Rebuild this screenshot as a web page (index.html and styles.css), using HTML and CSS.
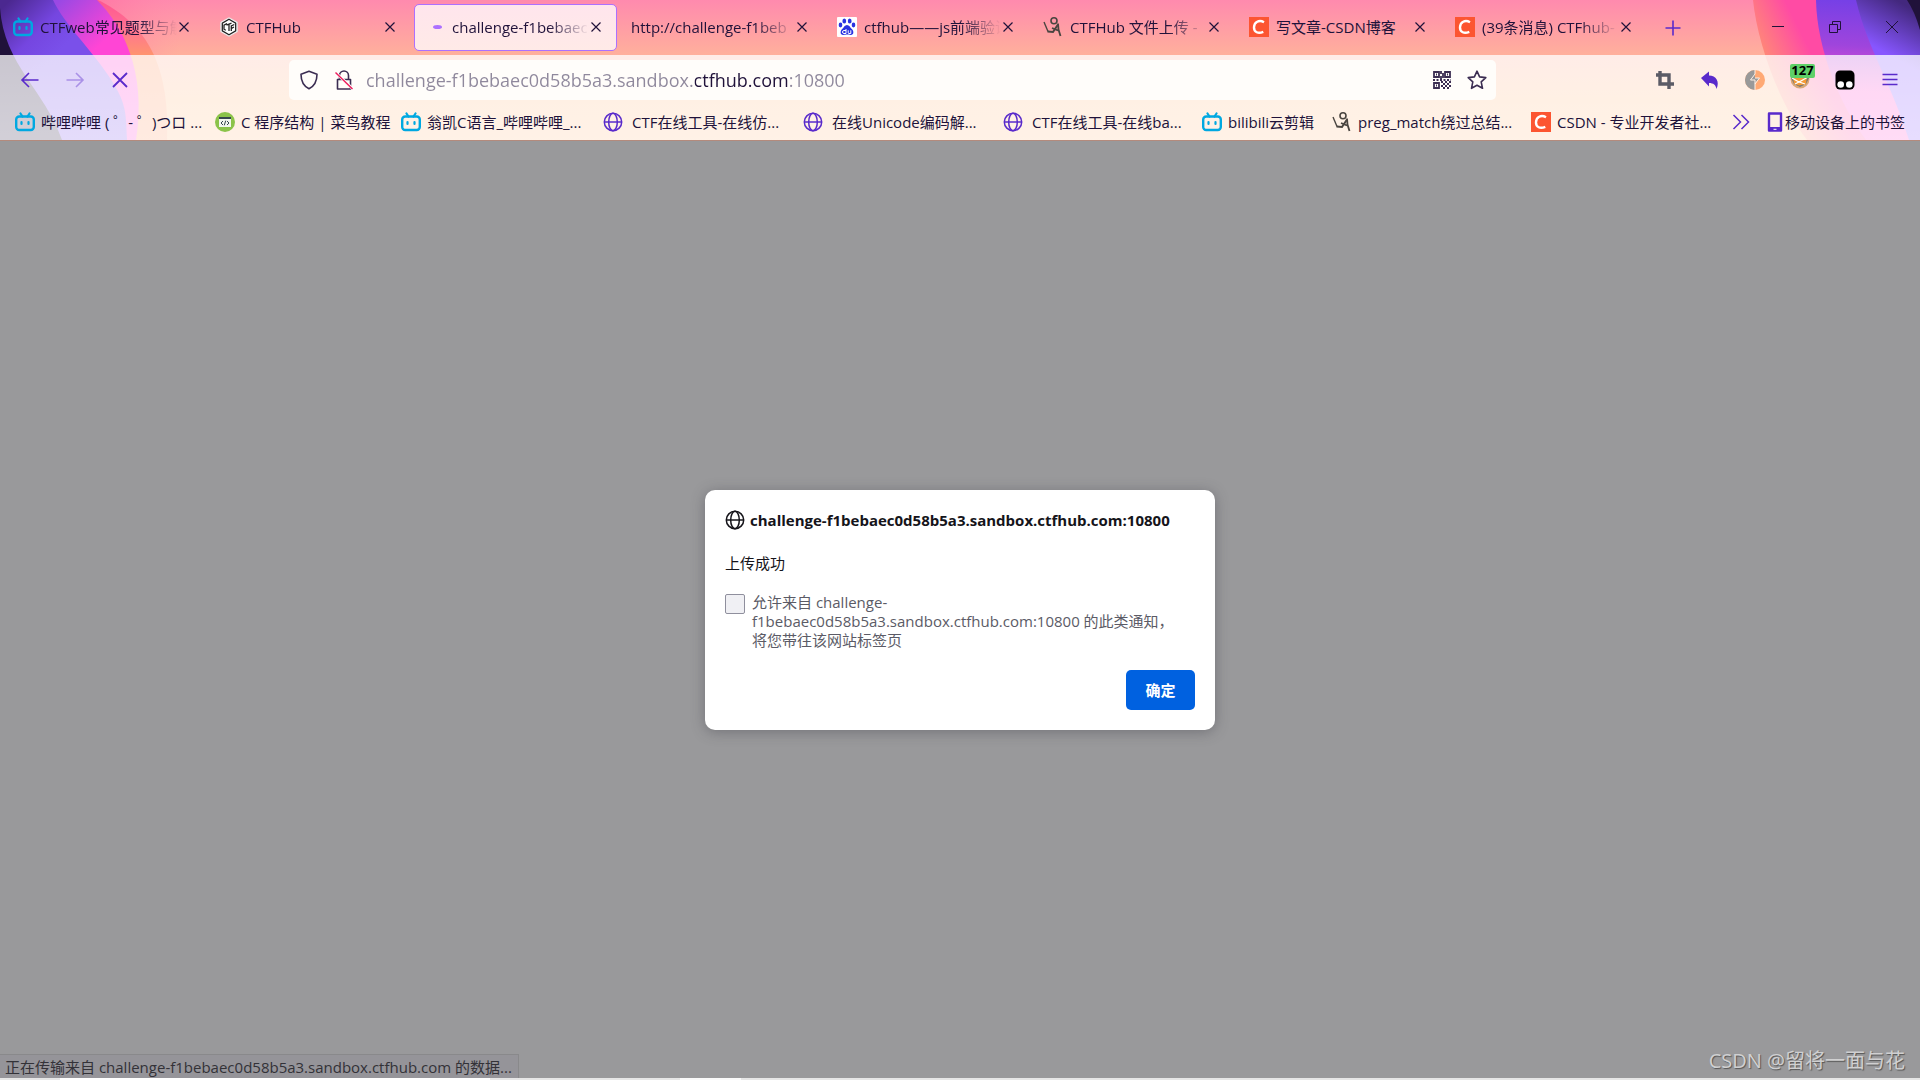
FILE: index.html
```html
<!DOCTYPE html>
<html lang="zh-CN">
<head>
    <meta charset="UTF-8">
    <meta name="viewport" content="width=device-width, initial-scale=1.0">
    <title>challenge-f1bebaec0d58b5a3.sandbox.ctfhub.com:10800</title>
    <link rel="stylesheet" href="styles.css">
</head>
<body>

    <!-- shared icons -->
    <svg class="sprite" aria-hidden="true">
        <symbol id="tv" viewBox="0 0 20 20">
            <path d="M5.500 1.500l2 3M14.500 1.500l-2 3" fill="none" stroke="#00a8e1" stroke-width="2.200" stroke-linecap="round"/>
            <rect x="1.200" y="4.500" width="17.600" height="13.500" rx="3" fill="none" stroke="#00a8e1" stroke-width="2.400"/>
            <path d="M6.500 10v2M13.500 10v2" stroke="#00a8e1" stroke-width="2.200" stroke-linecap="round"/>
        </symbol>
        <symbol id="globe" viewBox="0 0 20 20">
            <g fill="none" stroke="currentColor" stroke-width="1.500">
                <circle cx="10" cy="10" r="8.700"/>
                <ellipse cx="10" cy="10" rx="4.300" ry="8.700"/>
                <path d="M1.300 10h17.400"/>
            </g>
        </symbol>
        <symbol id="csdn" viewBox="0 0 20 20">
            <rect width="20" height="20" fill="#fc5531"/>
            <path d="M15 5.200C10 2.500 5.200 5 5 10.300c-.2 5 4.300 6.700 9.300 4.500" fill="none" stroke="#fff" stroke-width="2.400"/>
        </symbol>
        <symbol id="stick" viewBox="0 0 20 20">
            <g fill="none" stroke="#4a4540">
                <circle cx="11" cy="3.800" r="3" stroke-width="1.600"/>
                <path d="M1 5l4 9.500" stroke-width="1.400"/>
                <path d="M4.500 14.500L10 15l5-7.500" stroke-width="2"/>
                <path d="M15 6.500l.5 6 2 6.500M9 11l6 2.500" stroke-width="1.800"/>
            </g>
        </symbol>
        <symbol id="close" viewBox="0 0 12 12">
            <path d="M1.500 1.500l9 9M10.500 1.500l-9 9" fill="none" stroke="currentColor" stroke-width="1.200"/>
        </symbol>
    </svg>

    <header class="browser">
        <svg class="art art-left" viewBox="0 0 200 140" aria-hidden="true">
            <defs>
                <linearGradient id="l1" gradientUnits="userSpaceOnUse" x1="0" y1="0" x2="0" y2="60">
                    <stop offset="0" stop-color="#ff5592"/><stop offset=".5" stop-color="#ff7490"/><stop offset="1" stop-color="#ff9a68"/>
                </linearGradient>
                <linearGradient id="l2" gradientUnits="userSpaceOnUse" x1="60" y1="0" x2="100" y2="45">
                    <stop offset="0" stop-color="#9a48e4"/><stop offset="1" stop-color="#ff45d5"/>
                </linearGradient>
                <linearGradient id="l3" gradientUnits="userSpaceOnUse" x1="10" y1="0" x2="60" y2="50">
                    <stop offset="0" stop-color="#4b2890"/><stop offset=".6" stop-color="#7546e0"/><stop offset="1" stop-color="#7a50ea"/>
                </linearGradient>
                <linearGradient id="l4" x1="0" y1="0" x2="1" y2="0">
                    <stop offset=".4" stop-color="#ff5f98" stop-opacity=".6"/><stop offset=".9" stop-color="#ff86ab" stop-opacity="0"/>
                </linearGradient>
            </defs>
            <path d="M0 0H200V55H0z" fill="url(#l4)"/>
            <path d="M98 0C142 22 170 58 167 140H0V0z" fill="url(#l1)"/>
            <path d="M97 0C122 25 147 70 136 140H0V0z" fill="url(#l2)"/>
            <path d="M53 0C65 25 90 48 108 75S126 110 127 140H0V0z" fill="url(#l3)"/>
            <path d="M0 8C4 65 45 90 62 140H0z" fill="#20123a"/>
        </svg>
        <svg class="art art-right" viewBox="0 0 240 140" aria-hidden="true">
            <defs>
                <linearGradient id="r1" gradientUnits="userSpaceOnUse" x1="80" y1="50" x2="120" y2="30">
                    <stop offset="0" stop-color="#ff8a76"/><stop offset="1" stop-color="#ff4ba4"/>
                </linearGradient>
                <linearGradient id="r2" gradientUnits="userSpaceOnUse" x1="160" y1="0" x2="155" y2="90">
                    <stop offset="0" stop-color="#7640e6"/><stop offset=".5" stop-color="#9f45dc"/><stop offset="1" stop-color="#ff4fd0"/>
                </linearGradient>
                <linearGradient id="r3" gradientUnits="userSpaceOnUse" x1="225" y1="5" x2="200" y2="50">
                    <stop offset="0" stop-color="#43287e"/><stop offset="1" stop-color="#8756ff"/>
                </linearGradient>
            </defs>
            <path d="M73 0C77 40 97 100 127 140H240V0z" fill="url(#r1)"/>
            <path d="M136 0C137 50 160 105 186 140H240V0z" fill="url(#r2)"/>
            <path d="M176 0C188 50 210 80 229 140H240V0z" fill="url(#r3)"/>
            <path d="M227 0Q235 12 240 30V0z" fill="#20123a"/>
        </svg>

        <div class="titlebar">
            <nav class="tabs">
                <div class="tab">
                    <svg class="icon"><use href="#tv"/></svg>
                    <a href="#" class="tab-title">CTFweb常见题型与解</a>
                    <button class="tab-close" aria-label="关闭"><svg><use href="#close"/></svg></button>
                </div>
                <div class="tab">
                    <svg class="icon" viewBox="0 0 20 20">
                        <path d="M10 .5l8.500 4.700v9.600L10 19.500l-8.500-4.700V5.200z" fill="#fff" stroke="#ddd" stroke-width=".6"/>
                        <path d="M10 2.300l6.700 3.800v7.800L10 17.700l-6.700-3.800V6.100z" fill="none" stroke="#222" stroke-width="1.300"/>
                        <path d="M8 6.500L5 8.200v4l1.800 1M7.500 8.200l5-2M10 7.500v6.500M12.300 14V9l3-1.500M12.500 11.300l2.500-1.300" fill="none" stroke="#222" stroke-width="1.300"/>
                    </svg>
                    <a href="#" class="tab-title">CTFHub</a>
                    <button class="tab-close" aria-label="关闭"><svg><use href="#close"/></svg></button>
                </div>
                <div class="tab active">
                    <span class="icon loading"></span>
                    <a href="#" class="tab-title">challenge-f1bebaec</a>
                    <button class="tab-close" aria-label="关闭"><svg><use href="#close"/></svg></button>
                </div>
                <div class="tab">
                    <a href="#" class="tab-title">http://challenge-f1beb</a>
                    <button class="tab-close" aria-label="关闭"><svg><use href="#close"/></svg></button>
                </div>
                <div class="tab">
                    <svg class="icon" viewBox="0 0 20 20">
                        <rect width="20" height="20" rx="1" fill="#fff"/>
                        <g fill="#2932e1">
                            <ellipse cx="7.300" cy="4" rx="1.900" ry="2.600"/>
                            <ellipse cx="12.700" cy="4" rx="1.900" ry="2.600"/>
                            <ellipse cx="3.500" cy="8" rx="1.800" ry="2.400"/>
                            <ellipse cx="16.500" cy="8" rx="1.800" ry="2.400"/>
                            <path d="M10 8c2.300 0 3 2.300 4.800 4 2.200 2 2.200 6-1 6-1.500 0-2.500-.4-3.800-.4s-2.300.4-3.800.4c-3.200 0-3.200-4-1-6C7 10.300 7.700 8 10 8z"/>
                        </g>
                        <path d="M9 12v4.500H7a1.300 1.300 0 010-3h2M11.200 13.300v2.500q0 .7.800.7h1.800v-3.200" fill="none" stroke="#fff"/>
                    </svg>
                    <a href="#" class="tab-title">ctfhub——js前端验证</a>
                    <button class="tab-close" aria-label="关闭"><svg><use href="#close"/></svg></button>
                </div>
                <div class="tab">
                    <svg class="icon"><use href="#stick"/></svg>
                    <a href="#" class="tab-title">CTFHub 文件上传 -</a>
                    <button class="tab-close" aria-label="关闭"><svg><use href="#close"/></svg></button>
                </div>
                <div class="tab">
                    <svg class="icon"><use href="#csdn"/></svg>
                    <a href="#" class="tab-title fits">写文章-CSDN博客</a>
                    <button class="tab-close" aria-label="关闭"><svg><use href="#close"/></svg></button>
                </div>
                <div class="tab">
                    <svg class="icon"><use href="#csdn"/></svg>
                    <a href="#" class="tab-title">(39条消息) CTFhub-</a>
                    <button class="tab-close" aria-label="关闭"><svg><use href="#close"/></svg></button>
                </div>
            </nav>
            <button class="tool" aria-label="新建标签页">
                <svg class="icon" viewBox="0 0 20 20"><path d="M10 2.500v15M2.500 10h15" fill="none" stroke="currentColor" stroke-width="1.600"/></svg>
            </button>
            <div class="window-controls">
                <button aria-label="最小化"><svg viewBox="0 0 14 14"><path d="M1 6.500h12" fill="none" stroke="currentColor"/></svg></button>
                <button aria-label="还原"><svg viewBox="0 0 14 14"><path d="M1.500 4.500h8v8h-8zM4.500 4.500v-3h8v8h-3" fill="none" stroke="currentColor"/></svg></button>
                <button aria-label="关闭窗口"><svg viewBox="0 0 14 14"><path d="M1 1l12 12M13 1L1 13" fill="none" stroke="currentColor"/></svg></button>
            </div>
        </div>

        <div class="toolbars">
            <div class="navbar">
                <button class="tool" aria-label="后退">
                    <svg class="icon" viewBox="0 0 20 20"><path d="M18.500 10H2M9 3L2 10l7 7" fill="none" stroke="currentColor" stroke-width="1.600"/></svg>
                </button>
                <button class="tool" aria-label="前进" disabled>
                    <svg class="icon" viewBox="0 0 20 20"><path d="M1.500 10H18M11 3l7 7-7 7" fill="none" stroke="currentColor" stroke-width="1.600"/></svg>
                </button>
                <button class="tool" aria-label="停止">
                    <svg class="icon" viewBox="0 0 20 20"><path d="M3 3l14 14M17 3L3 17" fill="none" stroke="currentColor" stroke-width="1.800"/></svg>
                </button>

                <div class="urlbar">
                    <svg class="icon" viewBox="0 0 20 20"><path d="M10 1.200l8 3c0 7-2 11.500-8 14.600C4 15.700 2 11.200 2 4.200z" fill="none" stroke="currentColor" stroke-width="1.600" stroke-linejoin="round"/></svg>
                    <svg class="icon" viewBox="0 0 20 20">
                        <path d="M5.500 9V5.500a4.500 4.500 0 019 0V9M3.500 9.500h13v9.500h-13z" fill="none" stroke="currentColor" stroke-width="1.600" stroke-linejoin="round"/>
                        <path d="M2 3l17 16" stroke="#fff" stroke-width="3"/>
                        <path d="M1.500 2.500l17 16.500" stroke="#ed1e5c" stroke-width="1.500"/>
                    </svg>
                    <input type="text" aria-label="地址" value="challenge-f1bebaec0d58b5a3.sandbox.ctfhub.com:10800">
                    <svg class="icon" viewBox="0 0 20 20">
                        <g fill="none" stroke="currentColor" stroke-width="1.800">
                            <path d="M2 2h5v5H2zM13 2h5v5h-5zM2 13h5v5H2z"/>
                            <path d="M4 4.500h1M15 4.500h1M4 15.500h1M9 1v3M11 3v5M9 6v3"/>
                            <path d="M1 10h18" stroke-dasharray="2 1.500"/>
                            <path d="M9 12h10M9 16h10" stroke-dasharray="2 2"/>
                            <path d="M11 14h8M11 18h8" stroke-dasharray="2 2"/>
                        </g>
                    </svg>
                    <svg class="icon" viewBox="0 0 20 20"><path d="M10 1.200l2.600 5.700 6.200.7-4.600 4.200 1.300 6.500L10 15.200l-5.500 3.100 1.300-6.500L1.200 7.600l6.200-.7z" fill="none" stroke="currentColor" stroke-width="1.600" stroke-linejoin="round"/></svg>
                </div>

                <button class="tool" aria-label="截图">
                    <svg class="icon" viewBox="0 0 20 20"><path d="M5 1v13h14M1 5h13v14" fill="none" stroke="#5b5b66" stroke-width="3.400"/></svg>
                </button>
                <button class="tool" aria-label="撤销">
                    <svg class="icon" viewBox="0 0 20 20"><path d="M1 8l8-6.500v4c7 0 11 6 7.500 13.500-.7-4-3-6-7.500-6v3.500z" fill="currentColor"/></svg>
                </button>
                <button class="tool" aria-label="Burp">
                    <svg class="icon" viewBox="0 0 20 20">
                        <circle cx="10" cy="10" r="10" fill="#ffa974"/>
                        <path d="M10 0a10 10 0 000 20v-7l5-5h-5z" fill="#999"/>
                        <path d="M10 0v4l-4.500 6H10v10M10 8h4.500L10 14" fill="none" stroke="#fff1e6"/>
                    </svg>
                </button>
                <button class="tool" aria-label="Cookie">
                    <svg class="icon" viewBox="0 0 20 20">
                        <circle cx="10" cy="9" r="9.500" fill="#d9a878"/>
                        <path d="M1 8l4-3h10l4 3-3 6-6 3-6-3z" fill="#777"/>
                        <path d="M3 8l14-2-1 8-7 1.500-5-2z" fill="#f59a35"/>
                        <path d="M2 8l7 4 9-5M5 14l4-2 6 2" fill="none" stroke="#fff" stroke-width="1.200"/>
                    </svg>
                    <span class="badge">127</span>
                </button>
                <button class="tool" aria-label="Tampermonkey">
                    <svg class="icon" viewBox="0 0 20 20">
                        <rect x=".5" y=".5" width="19" height="19" rx="4.500"/>
                        <circle cx="5.700" cy="14.500" r="3.300" fill="#fff"/>
                        <circle cx="14.300" cy="14.500" r="3.300" fill="#fff"/>
                    </svg>
                </button>
                <button class="tool" aria-label="菜单">
                    <svg class="icon" viewBox="0 0 20 20"><path d="M2.500 4.500h15M2.500 9.500h15M2.500 14.500h15" fill="none" stroke="currentColor" stroke-width="1.500"/></svg>
                </button>
            </div>

            <nav class="bookmarks">
                <a href="#"><svg class="icon"><use href="#tv"/></svg>哔哩哔哩 ( ゜- ゜)つロ ...</a>
                <a href="#">
                    <svg class="icon" viewBox="0 0 20 20">
                        <circle cx="10" cy="10" r="10" fill="#8bc34a"/>
                        <path d="M4 5h12v10H4z" fill="#f2f7ee"/>
                        <path d="M4 5h12v2H4z" fill="#37474f"/>
                        <path d="M8 9l-2 2 2 2M12 9l2 2-2 2M10.700 8.700l-1.400 4.600" fill="none" stroke="#37474f"/>
                    </svg>C 程序结构 | 菜鸟教程</a>
                <a href="#"><svg class="icon"><use href="#tv"/></svg>翁凯C语言_哔哩哔哩_...</a>
                <a href="#" class="plain"><svg class="icon"><use href="#globe"/></svg>CTF在线工具-在线仿...</a>
                <a href="#" class="plain"><svg class="icon"><use href="#globe"/></svg>在线Unicode编码解...</a>
                <a href="#" class="plain"><svg class="icon"><use href="#globe"/></svg>CTF在线工具-在线ba...</a>
                <a href="#"><svg class="icon"><use href="#tv"/></svg>bilibili云剪辑</a>
                <a href="#"><svg class="icon"><use href="#stick"/></svg>preg_match绕过总结...</a>
                <a href="#"><svg class="icon"><use href="#csdn"/></svg>CSDN - 专业开发者社...</a>
                <button class="more" aria-label="更多书签">
                    <svg class="icon" viewBox="0 0 20 20"><path d="M2.500 3l7 7-7 7M10.500 3l7 7-7 7" fill="none" stroke="currentColor" stroke-width="1.500"/></svg>
                </button>
                <a href="#" class="mobile">
                    <svg class="phone" viewBox="0 0 16 20"><path d="M2 1.500h12v17H2z" fill="none" stroke="currentColor" stroke-width="2.400" stroke-linejoin="round"/><path d="M1 15h14v4H1z" fill="currentColor"/><path d="M6.500 17.300h3" stroke="#fff"/></svg>移动设备上的书签</a>
            </nav>
        </div>
    </header>

    <main class="page">
        <form class="dialog" role="dialog" aria-labelledby="origin">
            <h1 id="origin"><svg class="icon"><use href="#globe"/></svg>challenge-f1bebaec0d58b5a3.sandbox.ctfhub.com:10800</h1>
            <p>上传成功</p>
            <div class="allow">
                <input type="checkbox" id="allow">
                <label for="allow">允许来自 challenge-<br>f1bebaec0d58b5a3.sandbox.ctfhub.com:10800 的此类通知，<br>将您带往该网站标签页</label>
            </div>
            <button type="button" class="ok">确定</button>
        </form>
        <div class="status">正在传输来自 challenge-f1bebaec0d58b5a3.sandbox.ctfhub.com 的数据...</div>
        <div class="watermark">CSDN @留将一面与花</div>
    </main>

    <footer class="taskbar"><span class="search"></span><span class="running"></span></footer>

</body>
</html>
```

FILE: styles.css
```css
* {
    box-sizing: border-box;
}
body {
    margin: 0;
    min-height: 100vh;
    display: flex;
    flex-direction: column;
    font-family: "Open Sans", "Noto Sans CJK SC", sans-serif;
    font-size: 15px;
    color: #20123a;
}
a {
    color: inherit;
    text-decoration: none;
}
button {
    padding: 0;
    border: 0;
    background: none;
    color: inherit;
    font: inherit;
}
.sprite {
    position: absolute;
    width: 0;
    height: 0;
}
.icon {
    width: 20px;
    height: 20px;
    flex: none;
}

/* browser chrome */
.browser {
    position: relative;
    background: linear-gradient(#ff8aae, #ffb09c 55px, #ffbc85 100px);
    border-bottom: 1px solid #b48a7c;
}
.art {
    position: absolute;
    top: 0;
    height: 140px;
}
.art-left {
    left: 0;
    width: 200px;
}
.art-right {
    right: 0;
    width: 240px;
}
.titlebar {
    position: relative;
    display: flex;
    height: 55px;
    padding-left: 2px;
}
.tabs {
    display: flex;
    flex: 0 1 1648px;
    min-width: 0;
    padding: 4px 0;
}
.tab {
    flex: 1;
    min-width: 0;
    display: flex;
    align-items: center;
    gap: 7px;
    margin-right: 3px;
    padding: 0 14px 2px 10px;
    border: 1px solid transparent;
    border-radius: 5px;
}
.tab.active {
    background: linear-gradient(#ffe5ed, #ffeae7);
    border-color: #ac70ff;
}
.tab-title {
    flex: 1;
    overflow: hidden;
    white-space: nowrap;
    mask-image: linear-gradient(to left, transparent, #000 40px);
}
.tab-title.fits {
    mask-image: none;
}
.tab-close {
    width: 12px;
    height: 12px;
    margin-left: -6px;
}
.tab-close svg {
    display: block;
    width: 12px;
    height: 12px;
}
.loading::before {
    content: "";
    display: block;
    width: 9px;
    height: 4px;
    margin: 8px 0 0 8px;
    border-radius: 50%;
    background: #ac70ff;
}
.tool {
    position: relative;
    width: 45px;
    height: 40px;
    flex: none;
    display: flex;
    align-items: center;
    justify-content: center;
    color: #592acb;
}
.tool:disabled {
    opacity: .4;
}
.titlebar .tool {
    height: 55px;
}
.window-controls {
    display: flex;
    margin-left: auto;
}
.window-controls button {
    width: 57px;
}
.window-controls svg {
    width: 14px;
    height: 14px;
}
.toolbars {
    position: relative;
    background: linear-gradient(rgba(255, 255, 255, .76), rgba(255, 255, 255, .8));
}
.navbar {
    display: flex;
    padding: 5px 8px 0 7px;
}
.urlbar {
    flex: 1;
    min-width: 0;
    height: 40px;
    margin: 0 146px 0 147px;
    padding: 0 9px 0 10px;
    display: flex;
    align-items: center;
    gap: 15px;
    background: #fffdfa;
    border-radius: 5px;
    color: #3b2d52;
}
.urlbar input {
    flex: 1;
    min-width: 0;
    margin-left: -3px;
    padding: 0;
    border: 0;
    outline: 0;
    font: inherit;
    font-size: 18px;
    /* dims everything but the registered domain */
    color: transparent;
    background: linear-gradient(to right, #8f889c 329px, #20123a 329px, #20123a 424px, #8f889c 424px);
    background-clip: text;
}
.badge {
    position: absolute;
    top: 4px;
    left: 13px;
    width: 25px;
    height: 14px;
    border-radius: 2px;
    background: #5fd068;
    color: #000;
    font-size: 13px;
    font-weight: bold;
    line-height: 13px;
}
.bookmarks {
    display: grid;
    grid-template-columns: 200px 186px 202px 200px 200px 199px 130px 199px 1fr 36px auto;
    height: 40px;
    padding: 5px 15px 1px;
    align-items: center;
}
.bookmarks a {
    display: flex;
    align-items: center;
    gap: 6px;
    line-height: 24px;
    white-space: nowrap;
}
.bookmarks .plain {
    gap: 9px;
}
.plain .icon,
.more,
.phone {
    color: #592acb;
}
.bookmarks .more {
    height: 20px;
    text-align: left;
}
.bookmarks .mobile {
    gap: 2px;
}
.phone {
    width: 16px;
    height: 20px;
}

/* page area */
.page {
    position: relative;
    flex: 1;
    display: flex;
    align-items: center;
    justify-content: center;
    background: #99999b;
}
.dialog {
    width: 510px;
    padding: 20px;
    display: flex;
    flex-direction: column;
    background: #fff;
    border-radius: 10px;
    box-shadow: 0 2px 14px rgba(58, 57, 68, .4);
    color: #15141a;
}
.dialog h1 {
    display: flex;
    align-items: center;
    gap: 5px;
    height: 20px;
    margin: 0 0 22px;
    font-size: 15px;
}
.dialog p {
    margin: 0 0 19px;
    line-height: 22px;
}
.allow {
    display: flex;
    gap: 7px;
    margin-bottom: 20px;
    color: #5b5b66;
    line-height: 19px;
}
.allow input {
    appearance: none;
    width: 20px;
    height: 20px;
    margin: 1px 0 0;
    border: 1px solid #8f8f9d;
    border-radius: 2px;
    background: #f0f0f4;
}
.ok {
    align-self: flex-end;
    width: 69px;
    height: 40px;
    border-radius: 5px;
    background: #0061e0;
    color: #fff;
    font-weight: bold;
}
.status {
    position: absolute;
    left: 0;
    bottom: 0;
    height: 24px;
    padding: 0 6px 0 5px;
    border: 1px solid #89898b;
    border-width: 1px 1px 0 0;
    background: #959499;
    color: #333238;
    line-height: 24px;
}
.watermark {
    position: absolute;
    right: 15px;
    bottom: 2px;
    color: #d0d0d1;
    font-size: 20px;
    line-height: 30px;
    text-shadow: 1px 1px 1px #555;
}
.taskbar {
    display: flex;
    height: 2px;
    background: #e6e6e6;
}
.search {
    width: 430px;
    margin: 0 190px 0 60px;
    background: #fff;
}
.running {
    width: 61px;
    background: #fafafa;
}
```
